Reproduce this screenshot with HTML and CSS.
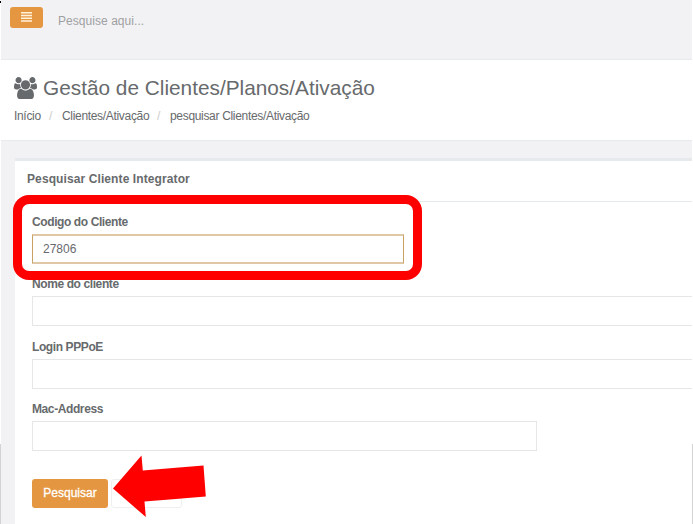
FILE: index.html
```
<!DOCTYPE html>
<html lang="pt-BR">
<head>
<meta charset="utf-8">
<title>Gestão de Clientes</title>
<link rel="stylesheet" href="styles.css">
</head>
<body>
<div class="page">
  <header class="topbar">
    <button class="menu" aria-label="Menu"><svg width="11" height="10" viewBox="0 0 11 10"><path d="M0 .8h11M0 3.500h11M0 6.200h11M0 8.900h11" stroke="#fff3dc" stroke-width="1.5"/></svg></button>
    <span class="search">Pesquise aqui...</span>
  </header>
  <section class="heading">
    <h1><svg class="users" viewBox="0 0 1920 1792" preserveAspectRatio="none"><path d="M593 896q-162 5-265 128h-134q-82 0-138-40.5t-56-118.5q0-353 124-353 6 0 43.5 21t97.5 42.5 119 21.5q67 0 133-23-5 37-5 66 0 139 81 256zm1071 637q0 120-73 189.5t-194 69.5h-874q-121 0-194-69.5t-73-189.5q0-53 3.5-103.5t14-109 26.5-108.5 43-97.5 62-81 85.5-53.5 111.5-20q10 0 43 21.5t73 48 107 48 135 21.5 135-21.5 107-48 73-48 43-21.5q61 0 111.5 20t85.5 53.5 62 81 43 97.5 26.5 108.5 14 109 3.5 103.5zm-1024-1277q0 106-75 181t-181 75-181-75-75-181 75-181 181-75 181 75 75 181zm704 384q0 159-112.5 271.5t-271.5 112.5-271.5-112.5-112.5-271.5 112.5-271.5 271.5-112.5 271.5 112.5 112.5 271.5zm576 225q0 78-56 118.5t-138 40.5h-134q-103-123-265-128 81-117 81-256 0-29-5-66 66 23 133 23 59 0 119-21.5t97.5-42.5 43.5-21q124 0 124 353zm-128-609q0 106-75 181t-181 75-181-75-75-181 75-181 181-75 181 75 75 181z"/></svg><span>Gestão de Clientes/Planos/Ativação</span></h1>
    <nav class="crumbs"><span>Início</span><i>/</i><span>Clientes/Ativação</span><i>/</i><span>pesquisar Clientes/Ativação</span></nav>
  </section>
  <main class="panel">
    <h2>Pesquisar Cliente Integrator</h2>
    <form class="form">
      <div class="field"><label for="code">Codigo do Cliente</label><input id="code" class="input code" value="27806"></div>
      <div class="field"><label for="name">Nome do cliente</label><input id="name" class="input"></div>
      <div class="field"><label for="login">Login PPPoE</label><input id="login" class="input"></div>
      <div class="field"><label for="mac">Mac-Address</label><input id="mac" class="input mac"></div>
      <div class="actions"><button type="button" class="submit">Pesquisar</button><button type="button" class="blank" aria-label="Limpar"></button></div>
    </form>
  </main>
</div>
<div class="speck"></div>
<div class="edge left"></div>
<div class="edge right"></div>
<div class="highlight"></div>
<svg class="arrow" width="94" height="63" viewBox="0 0 94 63"><path d="M1 33.500L29.500 0.500l1.300 15L91.500 10.500l2.300 31L32.500 46.500l1.300 15.500z" fill="#f00"/></svg>
</body>
</html>
```
FILE: styles.css
```
* { box-sizing: border-box; }
body {
  margin: 0;
  width: 693px;
  height: 524px;
  overflow: hidden;
  position: relative;
  background: #fff;
  color: #676a6c;
  font: 12px/16px "Liberation Sans", Arial, sans-serif;
}
.page { height: 524px; margin: 0 1px; background: #f2f2f4; overflow: hidden; }
.topbar { height: 59px; padding: 7px 0 0 9px; display: flex; align-items: flex-start; }
.menu {
  width: 33px; height: 21px; padding: 0 0 2px;
  display: flex; align-items: center; justify-content: center;
  background: #e59640; border: 0; border-radius: 3px;
}
.search { margin: 6px 0 0 15px; font-size: 12px; letter-spacing: .05px; color: #a0a0a2; }
.heading { height: 82px; background: #fff; border: solid #e7eaec; border-width: 1px 0; padding: 16px 0 0 13px; }
h1 { display: flex; align-items: center; margin: 0; height: 24px; font-size: 20.8px; font-weight: 400; line-height: 24px; white-space: nowrap; }
.users { width: 23px; height: 22px; margin-right: 6px; fill: #676a6c; }
.crumbs { display: flex; margin-top: 8px; white-space: nowrap; letter-spacing: -.32px; }
.crumbs i { font-style: normal; color: #ccc; width: 21px; padding-left: 8px; }
.crumbs span:first-child { width: 27px; }
.crumbs span:nth-child(3) { width: 87px; }
.panel { margin: 17px 0 0 14px; height: 380px; background: #fff; border-top: 3px solid #e7eaec; }
h2 { margin: 0; height: 41px; padding: 10px 0 0 12px; font-size: 12px; line-height: 16px; letter-spacing: .1px; border-bottom: 1px solid #e7eaec; }
.form { padding: 12px 0 0 17px; }
.field { height: 62.4px; }
label { display: block; height: 20px; font-weight: 700; line-height: 16px; letter-spacing: -.4px; }
.input {
  display: block; width: 680px; height: 30px; padding: 0 10px;
  border: 1px solid #e5e6e7; background: #fff; color: #676a6c;
  font: 12px "Liberation Sans", Arial, sans-serif; outline: 0;
}
.code { width: 372px; border-color: #e0c8a6 #c9a263; border-width: 2px 1px; }
.mac { width: 505px; }
.actions { display: flex; gap: 3px; padding-top: 15px; }
.submit {
  width: 76px; height: 29px; padding: 0; border: 0; border-radius: 3px;
  background: #e59640; color: #fff; font: 12px "Liberation Sans", Arial, sans-serif;
  -webkit-text-stroke: .3px #fff;
}
.blank { width: 71px; height: 29px; border: 1px solid #eeeff0; border-radius: 3px; background: #fff; }
.speck { position: absolute; left: 0; top: 1px; width: 1px; height: 2px; background: #000; }
.edge { position: absolute; top: 444px; bottom: 0; width: 1px; background: #d3d3d3; }
.left { left: 0; }
.right { right: 0; }
.highlight { position: absolute; left: 13px; top: 195px; width: 409px; height: 85px; border: 9px solid #f00; border-radius: 16px; }
.arrow { position: absolute; left: 112px; top: 455px; }
```
